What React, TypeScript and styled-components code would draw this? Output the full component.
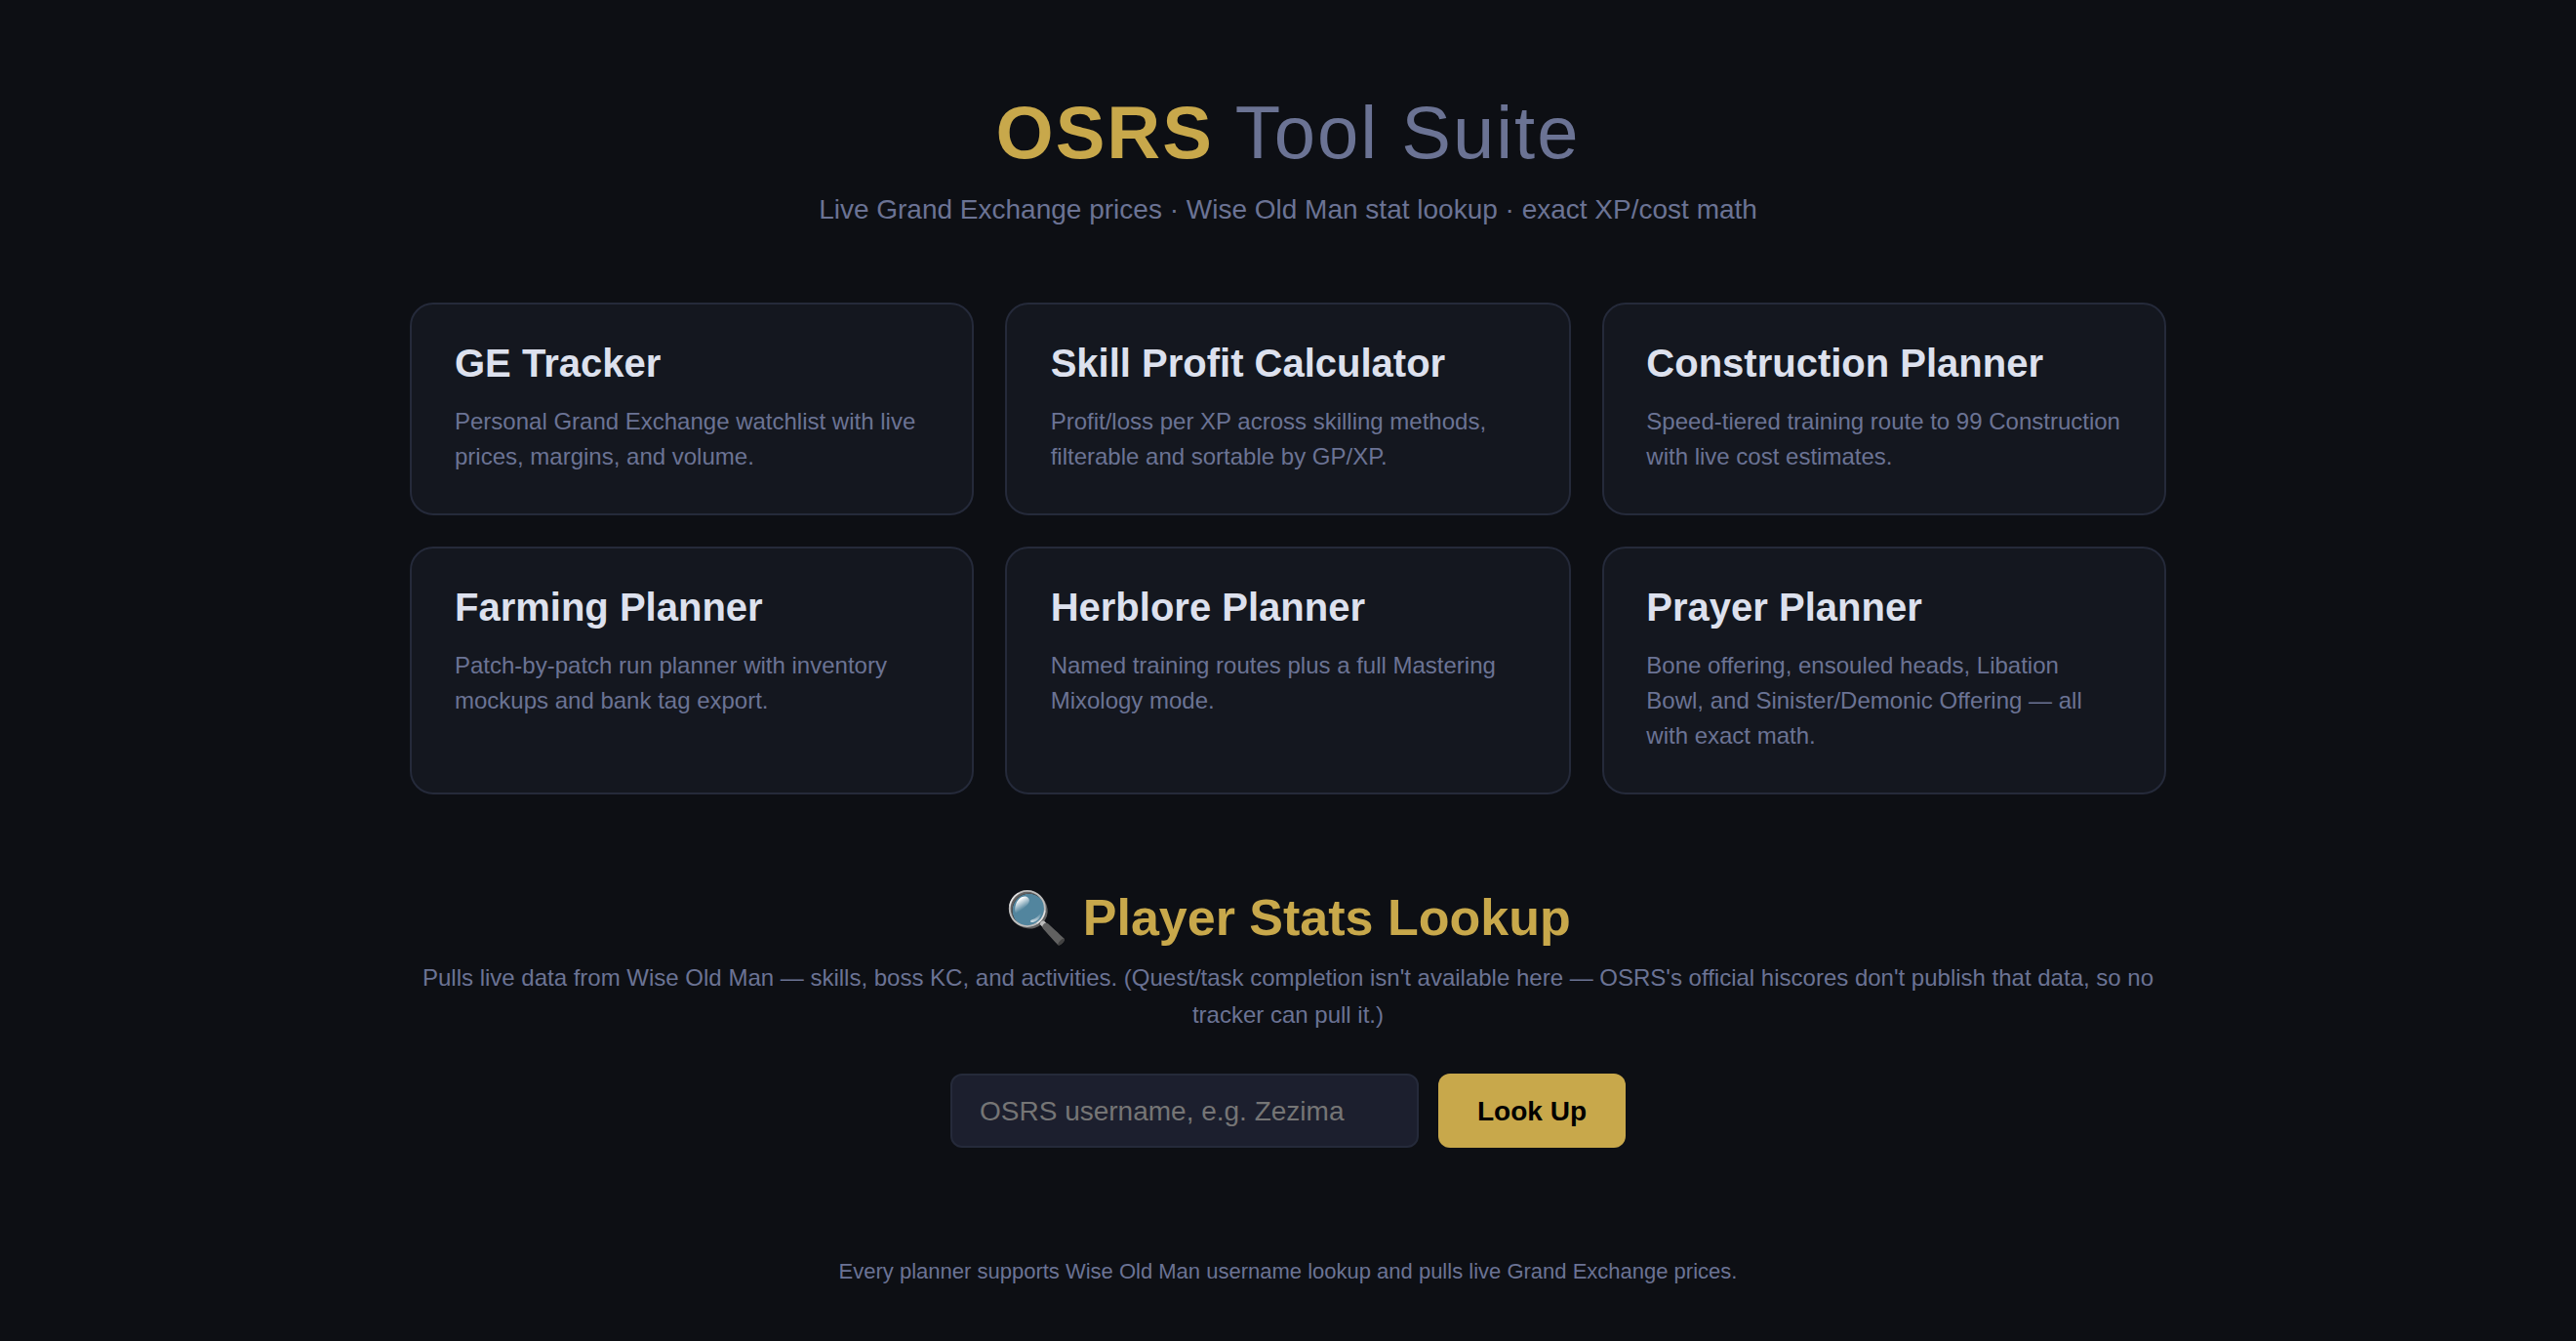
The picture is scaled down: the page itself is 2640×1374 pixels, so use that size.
import React from "react";
import styled, { createGlobalStyle } from "styled-components";

const GlobalStyle = createGlobalStyle`
  *, *::before, *::after { box-sizing: border-box; }
  html, body { margin: 0; padding: 0; background: #0d0f14; }
  body, input, button { font-family: "Liberation Sans", Arial, sans-serif; }
  h1, h2, h3, p { margin: 0; }
`;

const Page = styled.main`
  min-height: 100vh;
  width: 1800px;
  margin: 0 auto;
  padding-top: 92px;
  display: flex;
  flex-direction: column;
  color: #dde1ee;
`;

const Header = styled.header`
  display: flex;
  flex-direction: column;
  gap: 19px;
  text-align: center;
  margin-bottom: 79px;
`;

const Title = styled.h1`
  font-size: 76px;
  line-height: 88px;
  font-weight: 700;
  letter-spacing: 2px;
  color: #c8a84b;
`;

const TitleRest = styled.span`
  font-weight: 400;
  color: #6b7394;
`;

const Subtitle = styled.p`
  font-size: 28px;
  line-height: 32px;
  color: #6b7394;
`;

const CardGrid = styled.section`
  display: grid;
  grid-template-columns: 578px 580px 578px;
  gap: 32px;
`;

const Card = styled.article`
  display: flex;
  flex-direction: column;
  gap: 22px;
  padding: 40px 44px;
  border: 2px solid #252a3a;
  border-radius: 24px;
  background: #14171f;

  &:nth-child(3n + 2) {
    padding-left: 44.67px;
  }

  &:nth-child(3n) {
    padding-left: 43.33px;
  }
`;

const CardTitle = styled.h3`
  font-size: 40px;
  line-height: 40px;
  font-weight: 700;
`;

const CardText = styled.p`
  font-size: 24px;
  line-height: 36px;
  color: #6b7394;
`;

const Lookup = styled.section`
  margin-top: 96px;
  text-align: center;
`;

const LookupTitle = styled.h2`
  font-size: 52px;
  line-height: 60px;
  height: 60px;
  font-weight: 700;
  color: #c8a84b;
`;

const LookupText = styled.p`
  margin-top: 13px;
  font-size: 24px;
  line-height: 38.4px;
  color: #6b7394;
`;

const LookupForm = styled.form`
  display: flex;
  justify-content: center;
  gap: 20px;
  margin-top: 40px;
`;

const NameInput = styled.input`
  width: 480px;
  height: 76px;
  padding: 2px 28px 0;
  border: 2px solid #252a3a;
  border-radius: 12px;
  background: #1c1f2e;
  color: #dde1ee;
  font-size: 28px;
  outline: none;
`;

const LookupButton = styled.button`
  height: 76px;
  padding: 2px 40px 0;
  border: 0;
  border-radius: 12px;
  background: #c8a84b;
  color: #000;
  font-size: 28px;
  font-weight: 700;
`;

const Footer = styled.footer`
  margin-top: 114px;
  text-align: center;
  font-size: 22px;
  line-height: 26px;
  color: #6b7394;
`;

const tools = [
  { name: "GE Tracker", text: "Personal Grand Exchange watchlist with live prices, margins, and volume." },
  { name: "Skill Profit Calculator", text: "Profit/loss per XP across skilling methods, filterable and sortable by GP/XP." },
  { name: "Construction Planner", text: "Speed-tiered training route to 99 Construction with live cost estimates." },
  { name: "Farming Planner", text: "Patch-by-patch run planner with inventory mockups and bank tag export." },
  { name: "Herblore Planner", text: "Named training routes plus a full Mastering Mixology mode." },
  { name: "Prayer Planner", text: "Bone offering, ensouled heads, Libation Bowl, and Sinister/Demonic Offering — all with exact math." },
];

export default function App() {
  return (
    <>
      <GlobalStyle />
      <Page>
        <Header>
          <Title>
            OSRS<TitleRest> Tool Suite</TitleRest>
          </Title>
          <Subtitle>Live Grand Exchange prices · Wise Old Man stat lookup · exact XP/cost math</Subtitle>
        </Header>
        <CardGrid>
          {tools.map((tool) => (
            <Card key={tool.name}>
              <CardTitle>{tool.name}</CardTitle>
              <CardText>{tool.text}</CardText>
            </Card>
          ))}
        </CardGrid>
        <Lookup>
          <LookupTitle>🔍 Player Stats Lookup</LookupTitle>
          <LookupText>
            Pulls live data from Wise Old Man — skills, boss KC, and activities. (Quest/task completion isn't
            available here — OSRS's official hiscores don't publish that data, so no tracker can pull it.)
          </LookupText>
          <LookupForm onSubmit={(event) => event.preventDefault()}>
            <NameInput placeholder="OSRS username, e.g. Zezima" />
            <LookupButton type="submit">Look Up</LookupButton>
          </LookupForm>
        </Lookup>
        <Footer>Every planner supports Wise Old Man username lookup and pulls live Grand Exchange prices.</Footer>
      </Page>
    </>
  );
}
